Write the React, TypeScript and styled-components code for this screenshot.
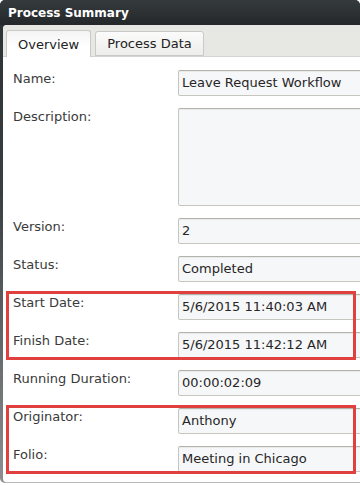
import { ReactNode } from 'react'
import styled, { createGlobalStyle } from 'styled-components'

const GlobalStyle = createGlobalStyle`
  html, body {
    margin: 0;
    padding: 0;
    background: #ffffff;
    overflow: hidden;
  }
  body {
    font-family: 'DejaVu Sans', Verdana, sans-serif;
    font-size: 13px;
  }
`

const Window = styled.div`
  width: 360px;
  height: 483px;
  display: flex;
  flex-direction: column;
  background: linear-gradient(to bottom, #2c3134 0%, #3a3e41 40%, #8d8f90 100%);
  border-radius: 5px 5px 0 5px;
  padding-left: 3px;
  box-sizing: border-box;
  overflow: hidden;
`

const TitleBar = styled.div`
  height: 25px;
  flex: 0 0 25px;
  display: flex;
  align-items: center;
  padding-left: 8px;
  color: #ffffff;
  font-weight: bold;
  font-size: 12px;
  background: linear-gradient(to bottom, #353a3d, #24282b);
  margin-left: -3px;
  border-radius: 5px 5px 0 0;
`

const Panel = styled.div`
  flex: 1;
  display: flex;
  flex-direction: column;
  background: #ffffff;
  border-radius: 4px 0 0 4px;
  border-bottom: 1px solid #b9b9b5;
  overflow: hidden;
`

const TabStrip = styled.div`
  height: 32px;
  flex: 0 0 32px;
  display: flex;
  align-items: flex-end;
  gap: 4px;
  padding-left: 3px;
  box-sizing: border-box;
  background: #e7e7e3;
  border-bottom: 1px solid #d3d3cf;
`

const Tab = styled.div<{ $active?: boolean }>`
  height: ${(p) => (p.$active ? '27px' : '25px')};
  margin-bottom: ${(p) => (p.$active ? '-1px' : '0')};
  box-sizing: border-box;
  display: flex;
  align-items: center;
  padding: 0 11px 0 11px;
  color: #222;
  border: 1px solid #c9c9c5;
  border-bottom: ${(p) => (p.$active ? 'none' : '1px solid #c9c9c5')};
  border-radius: 3px 3px 0 0;
  background: ${(p) =>
    p.$active
      ? 'linear-gradient(to bottom, #f4f4f4, #ffffff 60%)'
      : 'linear-gradient(to bottom, #fbfbfb, #ededeb)'};
  padding-top: ${(p) => (p.$active ? '1px' : '0')};
`

const Form = styled.div`
  display: flex;
  flex-direction: column;
  gap: 12px;
  padding: 13px 0 0 10px;
`

const Row = styled.div`
  display: grid;
  grid-template-columns: 165px 1fr;
  align-items: start;
`

const Label = styled.div`
  color: #3a3a3a;
  line-height: 16px;
  padding-top: 1px;
`

const Field = styled.div<{ $tall?: boolean }>`
  height: ${(p) => (p.$tall ? '98px' : '26px')};
  margin-right: -20px;
  box-sizing: border-box;
  border: 1px solid #c6c6be;
  border-top-color: #b3b3ab;
  border-radius: 2px;
  background: #f6f7f9;
  box-shadow: inset 0 1px 1px rgba(0, 0, 0, 0.06);
  color: #262626;
  line-height: 24px;
  padding: 0 3px;
  white-space: nowrap;
  overflow: hidden;
`

const Highlight = styled.div`
  position: relative;
  display: flex;
  flex-direction: column;
  gap: 12px;
  &::after {
    content: '';
    position: absolute;
    top: -3px;
    left: -7px;
    right: 4px;
    bottom: -2px;
    border: 3px solid #e0403e;
    pointer-events: none;
  }
`

function FormRow({ label, value, tall }: { label: string; value?: string; tall?: boolean }) {
  return (
    <Row>
      <Label>{label}</Label>
      <Field $tall={tall}>{value}</Field>
    </Row>
  )
}

function Group({ children }: { children: ReactNode }) {
  return <Highlight>{children}</Highlight>
}

export default function App() {
  return (
    <>
      <GlobalStyle />
      <Window>
        <TitleBar>Process Summary</TitleBar>
        <Panel>
          <TabStrip>
            <Tab $active>Overview</Tab>
            <Tab>Process Data</Tab>
          </TabStrip>
          <Form>
            <FormRow label="Name:" value="Leave Request Workflow" />
            <FormRow label="Description:" tall />
            <FormRow label="Version:" value="2" />
            <FormRow label="Status:" value="Completed" />
            <Group>
              <FormRow label="Start Date:" value="5/6/2015 11:40:03 AM" />
              <FormRow label="Finish Date:" value="5/6/2015 11:42:12 AM" />
            </Group>
            <FormRow label="Running Duration:" value="00:00:02:09" />
            <Group>
              <FormRow label="Originator:" value="Anthony" />
              <FormRow label="Folio:" value="Meeting in Chicago" />
            </Group>
          </Form>
        </Panel>
      </Window>
    </>
  )
}
